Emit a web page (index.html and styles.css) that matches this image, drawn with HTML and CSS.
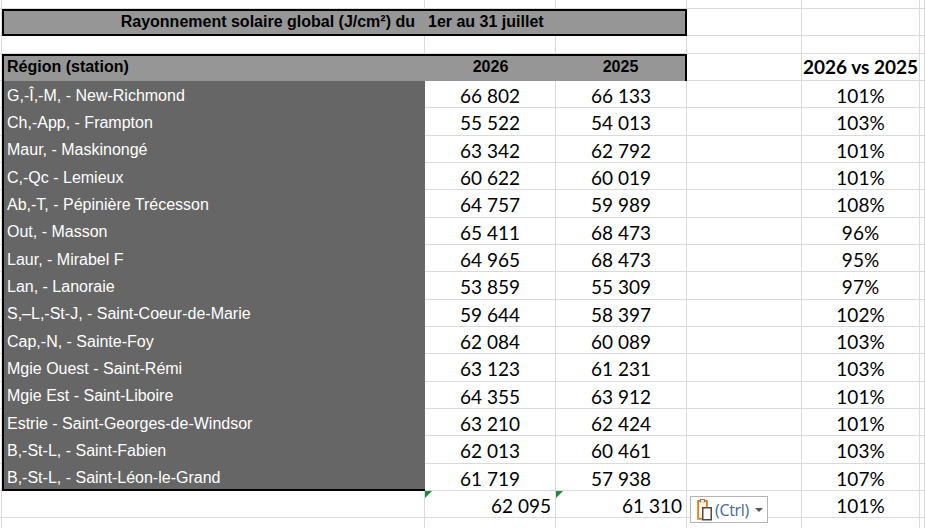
FILE: index.html
```html
<!DOCTYPE html>
<html lang="fr">
<head>
<meta charset="utf-8">
<title>Rayonnement solaire global</title>
<link rel="stylesheet" href="styles.css">
</head>
<body>
<div class="sheet">
  <div class="row r-top">
    <div class="c g"></div><div class="c g"></div><div class="c g"></div><div class="c g"></div><div class="c g"></div><div class="c g"></div><div class="c g"></div>
  </div>
  <div class="row r-title">
    <div class="c g"></div>
    <div class="title">
      <span class="title-a">Rayonnement solaire global (J/cm²) du</span>
      <span class="title-b">1er au 31 juillet</span>
    </div>
    <div class="c g"></div><div class="c g"></div><div class="c g"></div>
  </div>
  <div class="row r-blank">
    <div class="c g"></div><div class="c g"></div><div class="c g"></div><div class="c g"></div><div class="c g"></div><div class="c g"></div><div class="c g"></div>
  </div>
  <div class="row r-head">
    <div class="c g"></div>
    <div class="c head head-a">Région (station)</div>
    <div class="c head head-mid">2026</div>
    <div class="c head head-c">2025</div>
    <div class="c g"></div>
    <div class="c g num-h">2026 vs 2025</div>
    <div class="c g"></div>
  </div>

  <div class="row r-data"><div class="c g"></div><div class="c name">G,-Î,-M, - New-Richmond</div><div class="c g num">66 802</div><div class="c g num">66 133</div><div class="c g"></div><div class="c g num">101%</div><div class="c g"></div></div>
  <div class="row r-data"><div class="c g"></div><div class="c name">Ch,-App, - Frampton</div><div class="c g num">55 522</div><div class="c g num">54 013</div><div class="c g"></div><div class="c g num">103%</div><div class="c g"></div></div>
  <div class="row r-data"><div class="c g"></div><div class="c name">Maur, - Maskinongé</div><div class="c g num">63 342</div><div class="c g num">62 792</div><div class="c g"></div><div class="c g num">101%</div><div class="c g"></div></div>
  <div class="row r-data"><div class="c g"></div><div class="c name">C,-Qc - Lemieux</div><div class="c g num">60 622</div><div class="c g num">60 019</div><div class="c g"></div><div class="c g num">101%</div><div class="c g"></div></div>
  <div class="row r-data"><div class="c g"></div><div class="c name">Ab,-T, - Pépinière Trécesson</div><div class="c g num">64 757</div><div class="c g num">59 989</div><div class="c g"></div><div class="c g num">108%</div><div class="c g"></div></div>
  <div class="row r-data"><div class="c g"></div><div class="c name">Out, - Masson</div><div class="c g num">65 411</div><div class="c g num">68 473</div><div class="c g"></div><div class="c g num">96%</div><div class="c g"></div></div>
  <div class="row r-data"><div class="c g"></div><div class="c name">Laur, - Mirabel F</div><div class="c g num">64 965</div><div class="c g num">68 473</div><div class="c g"></div><div class="c g num">95%</div><div class="c g"></div></div>
  <div class="row r-data"><div class="c g"></div><div class="c name">Lan, - Lanoraie</div><div class="c g num">53 859</div><div class="c g num">55 309</div><div class="c g"></div><div class="c g num">97%</div><div class="c g"></div></div>
  <div class="row r-data"><div class="c g"></div><div class="c name">S,–L,-St-J, - Saint-Coeur-de-Marie</div><div class="c g num">59 644</div><div class="c g num">58 397</div><div class="c g"></div><div class="c g num">102%</div><div class="c g"></div></div>
  <div class="row r-data"><div class="c g"></div><div class="c name">Cap,-N, - Sainte-Foy</div><div class="c g num">62 084</div><div class="c g num">60 089</div><div class="c g"></div><div class="c g num">103%</div><div class="c g"></div></div>
  <div class="row r-data"><div class="c g"></div><div class="c name">Mgie Ouest - Saint-Rémi</div><div class="c g num">63 123</div><div class="c g num">61 231</div><div class="c g"></div><div class="c g num">103%</div><div class="c g"></div></div>
  <div class="row r-data"><div class="c g"></div><div class="c name">Mgie Est - Saint-Liboire</div><div class="c g num">64 355</div><div class="c g num">63 912</div><div class="c g"></div><div class="c g num">101%</div><div class="c g"></div></div>
  <div class="row r-data"><div class="c g"></div><div class="c name">Estrie - Saint-Georges-de-Windsor</div><div class="c g num">63 210</div><div class="c g num">62 424</div><div class="c g"></div><div class="c g num">101%</div><div class="c g"></div></div>
  <div class="row r-data"><div class="c g"></div><div class="c name">B,-St-L, - Saint-Fabien</div><div class="c g num">62 013</div><div class="c g num">60 461</div><div class="c g"></div><div class="c g num">103%</div><div class="c g"></div></div>
  <div class="row r-data"><div class="c g"></div><div class="c name name-last">B,-St-L, - Saint-Léon-le-Grand</div><div class="c g num">61 719</div><div class="c g num">57 938</div><div class="c g"></div><div class="c g num">107%</div><div class="c g"></div></div>

  <div class="row r-data">
    <div class="c g"></div>
    <div class="c g"></div>
    <div class="c g num total"><span class="flag"></span>62 095</div>
    <div class="c g num total"><span class="flag"></span>61 310</div>
    <div class="c g"></div>
    <div class="c g num">101%</div>
    <div class="c g"></div>
  </div>
  <div class="row r-end">
    <div class="c g"></div><div class="c g"></div><div class="c g"></div><div class="c g"></div><div class="c g"></div><div class="c g"></div><div class="c g"></div>
  </div>

  <div class="paste">
    <svg class="paste-icon" width="16" height="23" viewBox="0 0 16 23">
      <path d="M3 3 H1.2 V20.8 H6" fill="none" stroke="#e4801c" stroke-width="2"/>
      <path d="M8 3 H9.8 V9" fill="none" stroke="#e4801c" stroke-width="2"/>
      <rect x="3.5" y="1.5" width="4" height="3" fill="#fbe3c8" stroke="#7a7a7a" stroke-width="1"/>
      <rect x="2.2" y="4.2" width="6.6" height="15.6" fill="#fff4e6"/>
      <rect x="5.75" y="9.75" width="8.5" height="12" fill="#fff" stroke="#4b4b4b" stroke-width="1.5"/>
    </svg>
    <span class="paste-text">(Ctrl)</span>
    <span class="paste-caret"></span>
  </div>
</div>
</body>
</html>
```
FILE: styles.css
```css
* { box-sizing: border-box; }
html, body { margin: 0; padding: 0; background: #fff; }

.sheet {
  position: relative;
  width: 925px;
  height: 528px;
  overflow: hidden;
  background: #fff;
}

.row {
  display: grid;
  grid-template-columns: 2px 423px 131px 131px 115px 118px 1fr;
}
.r-top { height: 8.5px; }
.r-title { height: 27.8px; }
.r-blank { height: 17.3px; }
.r-head { height: 27.4px; }
.r-data { height: 27.33px; }
.r-end { height: 12px; }

.c {
  display: flex;
  align-items: center;
  min-width: 0;
  white-space: nowrap;
}
.g {
  border-right: 1px solid #dadada;
  border-bottom: 1px solid #dadada;
}

.title {
  grid-column: 2 / 5;
  display: grid;
  grid-template-columns: 421px 1fr;
  align-items: center;
  background: #969696;
  border: 2px solid #000;
  font-family: "Liberation Sans", Arial, sans-serif;
  font-weight: bold;
  font-size: 16px;
  color: #000;
  white-space: nowrap;
}
.title-a { text-align: right; padding-right: 10px; }
.title-b { padding-left: 3px; }

.head {
  background: #969696;
  border-top: 2px solid #000;
  font-family: "Liberation Sans", Arial, sans-serif;
  font-weight: bold;
  font-size: 16px;
  color: #000;
  padding-bottom: 3px;
}
.head-a { border-left: 2px solid #000; padding-left: 3px; }
.head-mid { justify-content: center; }
.head-c { justify-content: center; border-right: 2px solid #000; }

.num-h {
  justify-content: center;
  font-family: Lato, "Open Sans", sans-serif;
  font-weight: bold;
  font-size: 19px;
  color: #000;
}

.name {
  background: #666666;
  border-left: 2px solid #000;
  padding-left: 3px;
  padding-top: 2px;
  font-family: "Liberation Sans", Arial, sans-serif;
  font-size: 16px;
  color: #fff;
}
.name-last { border-bottom: 2px solid #000; padding-top: 3px; }

.num {
  justify-content: center;
  font-family: Lato, "Open Sans", sans-serif;
  font-size: 19px;
  color: #000;
  padding-top: 3px;
}
.total {
  position: relative;
  justify-content: flex-end;
  padding-right: 4px;
}
.flag {
  position: absolute;
  left: 0;
  top: 0;
  width: 0;
  height: 0;
  border-top: 7px solid #1e8a3c;
  border-right: 7px solid transparent;
}

.paste {
  position: absolute;
  left: 690px;
  top: 496px;
  width: 78px;
  height: 27px;
  background: #fff;
  border: 1px solid #b4b4b4;
  display: flex;
  align-items: center;
  padding-left: 6px;
  gap: 2px;
}
.paste-icon { display: block; flex: none; }
.paste-text {
  font-family: "Open Sans", "Noto Sans", sans-serif;
  font-size: 16px;
  color: #44679a;
  letter-spacing: -0.3px;
}
.paste-caret {
  width: 0;
  height: 0;
  margin-left: 4px;
  border-left: 4px solid transparent;
  border-right: 4px solid transparent;
  border-top: 4px solid #555;
}
```
